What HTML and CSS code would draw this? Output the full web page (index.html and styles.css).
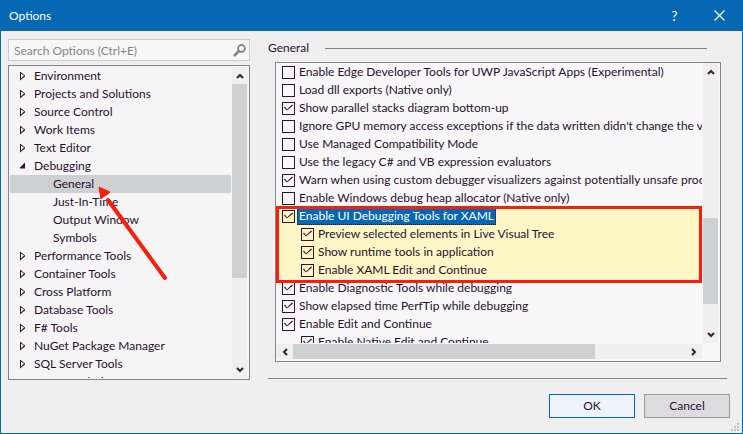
FILE: index.html
```html
<!DOCTYPE html>
<html lang="en">
<head>
<meta charset="utf-8">
<title>Options</title>
<link rel="stylesheet" href="styles.css">
</head>
<body>
<div class="dialog">
  <header class="titlebar">
    <h1 class="title">Options</h1>
    <button class="caption-button" type="button">?</button>
    <button class="caption-button" type="button" aria-label="Close">
      <svg width="11" height="11" viewBox="0 0 11 11"><path d="M.5 .5l10 10M10.500 .5l-10 10" stroke="#fff" stroke-width="1.200"/></svg>
    </button>
  </header>

  <main class="content">
    <section class="sidebar">
      <div class="search">
        <input class="search-input" type="text" placeholder="Search Options (Ctrl+E)" aria-label="Search Options">
        <svg class="search-icon" width="13" height="13" viewBox="0 0 13 13" fill="none" stroke="#858585"><circle cx="8.500" cy="4.500" r="3.500" stroke-width="1.800"/><path d="M6 7L1 12" stroke-width="2.600"/></svg>
      </div>
      <div class="tree-box">
        <ul class="tree">
          <li class="node"><span class="twisty"></span>Environment</li>
          <li class="node"><span class="twisty"></span>Projects and Solutions</li>
          <li class="node"><span class="twisty"></span>Source Control</li>
          <li class="node"><span class="twisty"></span>Work Items</li>
          <li class="node"><span class="twisty"></span>Text Editor</li>
          <li class="node"><span class="twisty open"></span>Debugging</li>
          <li class="node child selected">General
            <svg class="pointer" width="70" height="95" viewBox="0 0 70 95"><path d="M10 14L67 92" stroke="#fa1e0a" stroke-width="4" stroke-linecap="round"/><path d="M1 1L12 6L10 8L5 11L3 13Z" fill="#fa1e0a" stroke="#fa1e0a"/></svg>
          </li>
          <li class="node child">Just-In-Time</li>
          <li class="node child">Output Window</li>
          <li class="node child">Symbols</li>
          <li class="node"><span class="twisty"></span>Performance Tools</li>
          <li class="node"><span class="twisty"></span>Container Tools</li>
          <li class="node"><span class="twisty"></span>Cross Platform</li>
          <li class="node"><span class="twisty"></span>Database Tools</li>
          <li class="node"><span class="twisty"></span>F# Tools</li>
          <li class="node"><span class="twisty"></span>NuGet Package Manager</li>
          <li class="node"><span class="twisty"></span>SQL Server Tools</li>
          <li class="node"><span class="twisty"></span>Text Templating</li>
        </ul>
        <div class="vscroll">
          <button class="scroll-button" type="button" aria-label="Scroll up"><svg width="8" height="6" viewBox="0 0 8 6"><path d="M1 5L4 2L7 5"/></svg></button>
          <div class="track"><div class="thumb tree-thumb"></div></div>
          <button class="scroll-button" type="button" aria-label="Scroll down"><svg width="8" height="6" viewBox="0 0 8 6"><path d="M1 1L4 4L7 1"/></svg></button>
        </div>
      </div>
    </section>

    <section class="page">
      <h2 class="page-title">General</h2>
      <div class="list-box">
        <div class="list">
          <label class="option"><input type="checkbox"><span>Enable Edge Developer Tools for UWP JavaScript Apps (Experimental)</span></label>
          <label class="option"><input type="checkbox"><span>Load dll exports (Native only)</span></label>
          <label class="option"><input type="checkbox" checked><span>Show parallel stacks diagram bottom-up</span></label>
          <label class="option"><input type="checkbox"><span>Ignore GPU memory access exceptions if the data written didn't change the value</span></label>
          <label class="option"><input type="checkbox"><span>Use Managed Compatibility Mode</span></label>
          <label class="option"><input type="checkbox"><span>Use the legacy C# and VB expression evaluators</span></label>
          <label class="option"><input type="checkbox" checked><span>Warn when using custom debugger visualizers against potentially unsafe processes</span></label>
          <label class="option"><input type="checkbox"><span>Enable Windows debug heap allocator (Native only)</span></label>
          <div class="group">
            <label class="option"><input type="checkbox" checked><span class="current">Enable UI Debugging Tools for XAML</span></label>
            <label class="option nested"><input type="checkbox" checked><span>Preview selected elements in Live Visual Tree</span></label>
            <label class="option nested"><input type="checkbox" checked><span>Show runtime tools in application</span></label>
            <label class="option nested"><input type="checkbox" checked><span>Enable XAML Edit and Continue</span></label>
          </div>
          <label class="option"><input type="checkbox" checked><span>Enable Diagnostic Tools while debugging</span></label>
          <label class="option"><input type="checkbox" checked><span>Show elapsed time PerfTip while debugging</span></label>
          <label class="option"><input type="checkbox" checked><span>Enable Edit and Continue</span></label>
          <label class="option nested"><input type="checkbox" checked><span>Enable Native Edit and Continue</span></label>
        </div>
        <div class="vscroll">
          <button class="scroll-button" type="button" aria-label="Scroll up"><svg width="8" height="6" viewBox="0 0 8 6"><path d="M1 5L4 2L7 5"/></svg></button>
          <div class="track"><div class="thumb list-thumb"></div></div>
          <button class="scroll-button" type="button" aria-label="Scroll down"><svg width="8" height="6" viewBox="0 0 8 6"><path d="M1 1L4 4L7 1"/></svg></button>
        </div>
        <div class="hscroll">
          <button class="scroll-button" type="button" aria-label="Scroll left"><svg width="6" height="8" viewBox="0 0 6 8"><path d="M5 1L2 4L5 7"/></svg></button>
          <div class="track"><div class="thumb wide-thumb"></div></div>
          <button class="scroll-button" type="button" aria-label="Scroll right"><svg width="6" height="8" viewBox="0 0 6 8"><path d="M1 1L4 4L1 7"/></svg></button>
        </div>
      </div>
      <hr class="rule">
    </section>
  </main>

  <footer class="footer">
    <button class="button default" type="button">OK</button>
    <button class="button" type="button">Cancel</button>
    <svg class="grip" width="8" height="8" viewBox="0 0 8 8" fill="#c4c4c6"><path d="M6 0h2v2H6zM3 3h2v2H3zM6 3h2v2H6zM0 6h2v2H0zM3 6h2v2H3zM6 6h2v2H6z"/></svg>
  </footer>
</div>
</body>
</html>
```

FILE: styles.css
```css
* {
  box-sizing: border-box;
}

body {
  margin: 0;
  font: 12px/18px Lato, "Open Sans", sans-serif;
  color: #2a1030;
}

button,
input {
  font: inherit;
  color: inherit;
}

.dialog {
  display: flex;
  flex-direction: column;
  height: 100vh;
  overflow: hidden;
  background: #efeff0;
  border: 1px solid #0667b3;
  border-top: 0;
}

.titlebar {
  display: flex;
  align-items: center;
  flex: none;
  height: 31px;
  padding-left: 8px;
  background: #0667b3;
  color: #fff;
}

.title {
  flex: 1;
  margin: 0;
  font-size: 12px;
  font-weight: 400;
}

.caption-button {
  display: flex;
  align-items: center;
  justify-content: center;
  width: 45px;
  height: 31px;
  padding: 0;
  border: 0;
  background: none;
  font-size: 14px;
}

.content {
  display: flex;
  flex: 1;
  gap: 18px;
  min-height: 0;
  padding: 8px 15px 0 7px;
}

.sidebar {
  display: flex;
  flex-direction: column;
  flex: none;
  gap: 4px;
  width: 242px;
}

.search {
  display: flex;
  align-items: center;
  height: 22px;
  padding: 0 3px 0 5px;
  border: 1px solid #ccccce;
  background: #f7f7f8;
}

.search-input {
  flex: 1;
  min-width: 0;
  height: 20px;
  padding: 0;
  border: 0;
  outline: 0;
  background: none;
}

.search-input::placeholder {
  color: #858585;
  opacity: 1;
}

.tree-box {
  display: flex;
  flex: 1;
  min-height: 0;
  gap: 1px;
  padding: 1px 2px 1px 1px;
  border: 1px solid #858588;
  background: #f5f5f6;
}

.tree {
  flex: 1;
  margin: 0;
  padding: 0;
  list-style: none;
  overflow: hidden;
}

.node {
  display: flex;
  align-items: center;
  height: 18px;
  padding-left: 10px;
  white-space: nowrap;
}

.child {
  padding-left: 43px;
}

.selected {
  position: relative;
  background: #cfd0d2;
}

.pointer {
  position: absolute;
  left: 88px;
  top: 11px;
  z-index: 1;
  fill: none;
}

.twisty {
  width: 14px;
  height: 9px;
  background: #3a1030;
  clip-path: polygon(evenodd, 0 0, 5px 4px, 5px 5px, 0 9px, 0 0, 1px 2px, 1px 7px, 4px 4px, 1px 2px);
}

.twisty.open {
  clip-path: polygon(5px 1px, 5px 7px, -1px 7px);
}

.vscroll {
  display: flex;
  flex-direction: column;
  width: 15px;
  background: #efeff0;
}

.hscroll {
  display: flex;
  height: 15px;
  background: #efeff0;
}

.scroll-button {
  display: flex;
  align-items: center;
  justify-content: center;
  flex: none;
  width: 15px;
  height: 17px;
  padding: 0;
  border: 0;
  background: none;
}

.hscroll .scroll-button {
  width: 17px;
  height: 15px;
}

.scroll-button path {
  fill: none;
  stroke: #3a2038;
  stroke-width: 2;
}

.track {
  flex: 1;
}

.thumb {
  background: #cfd0d2;
}

.tree-thumb {
  height: 70%;
}

.list-thumb {
  height: 35%;
  margin-top: 138px;
}

.wide-thumb {
  width: 77%;
  height: 15px;
}

.page {
  display: flex;
  flex-direction: column;
  flex: 1;
  min-width: 0;
}

.page-title {
  display: flex;
  align-items: center;
  gap: 16px;
  margin: 0 20px 5px 0;
  font-size: 12px;
  font-weight: 400;
}

.page-title::after {
  content: "";
  flex: 1;
  height: 1px;
  background: #858588;
}

.list-box {
  display: grid;
  grid-template-columns: 1fr 15px;
  grid-template-rows: 1fr 15px;
  gap: 1px;
  flex: 1;
  min-height: 0;
  margin: 0 6px 0 7px;
  padding: 0 2px 2px 0;
  border: 1px solid #858588;
  background: #f7f7f8;
}

.list {
  min-width: 0;
  min-height: 0;
  overflow: hidden;
}

.option {
  display: flex;
  align-items: center;
  gap: 2px;
  height: 18px;
  padding-left: 6px;
  white-space: nowrap;
}

.option span {
  padding: 0 2px;
}

.nested {
  padding-left: 25px;
}

.option input {
  appearance: none;
  flex: none;
  width: 13px;
  height: 13px;
  margin: 0;
  border: 1px solid #3a1030;
}

.option input:checked::before {
  content: "";
  display: block;
  width: 11px;
  height: 11px;
  background: #3a1030;
  clip-path: polygon(1px 5px, 2px 4px, 4px 7px, 9px 2px, 10px 3px, 4px 8px);
}

.group {
  position: relative;
  background: #fdf7c6;
}

.group::after {
  content: "";
  position: absolute;
  inset: -1px 0 -4px;
  border: 3px solid #fa1e0a;
  pointer-events: none;
}

.option .current {
  background: #0667b3;
  color: #fff;
  outline: 1px dotted #3a1030;
  outline-offset: -1px;
}

.rule {
  width: 100%;
  height: 1px;
  margin: 16px 0 1px;
  border: 0;
  background: #858588;
}

.footer {
  position: relative;
  display: flex;
  justify-content: flex-end;
  flex: none;
  gap: 9px;
  padding: 14px 12px 15px;
}

.button {
  width: 86px;
  height: 24px;
  padding: 0;
  border: 1px solid #9a9a9c;
  background: #dcdcde;
}

.default {
  border-color: #0667b3;
  background: #edf3f8;
}

.grip {
  position: absolute;
  right: 3px;
  bottom: 2px;
}
```
